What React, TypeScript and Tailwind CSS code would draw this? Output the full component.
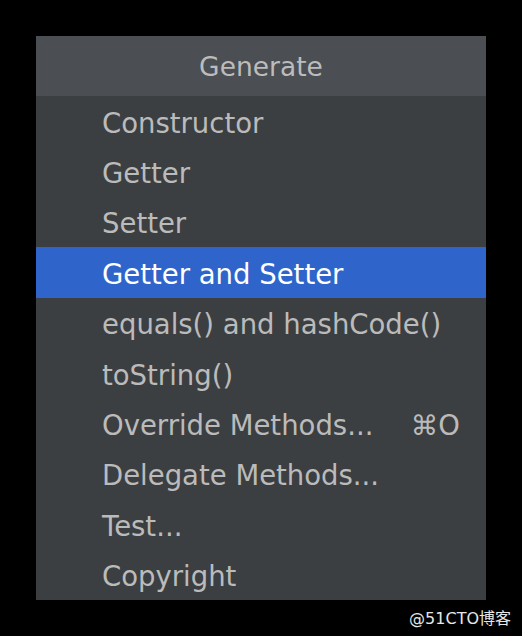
import React from "react";

const ITEMS = [
  { label: "Constructor" },
  { label: "Getter" },
  { label: "Setter" },
  { label: "Getter and Setter", selected: true },
  { label: "equals() and hashCode()" },
  { label: "toString()" },
  { label: "Override Methods...", shortcut: "⌘O" },
  { label: "Delegate Methods..." },
  { label: "Test..." },
  { label: "Copyright" },
];

export default function App() {
  return (
    <div
      className="w-[522px] h-[636px] bg-black pt-[36px] pl-[36px] flex flex-col"
      style={{ fontFamily: '"DejaVu Sans", "Noto Sans CJK SC", sans-serif' }}
    >
      {/* Popup */}
      <div className="w-[450px] flex flex-col bg-[#3c3f41]">
        <div className="h-[60px] bg-[#4b4e52] flex items-center justify-center text-[26.5px] text-[#bcbcbc] pt-[2px]">
          Generate
        </div>
        <div className="h-[504px] flex flex-col">
          {ITEMS.map((item) => (
            <div
              key={item.label}
              className={`flex-1 flex items-center pl-[66px] pr-[26px] pt-[4px] text-[27.5px] ${
                item.selected ? "bg-[#2f65ca] text-white" : "text-[#bbbbbb]"
              }`}
            >
              <span className="flex-1">{item.label}</span>
              {item.shortcut && <span>{item.shortcut}</span>}
            </div>
          ))}
        </div>
      </div>

      {/* Watermark */}
      <div className="flex justify-end pr-[11px] pt-[7px] text-[16px] text-[#e6e6e6]">
        @51CTO博客
      </div>
    </div>
  );
}
